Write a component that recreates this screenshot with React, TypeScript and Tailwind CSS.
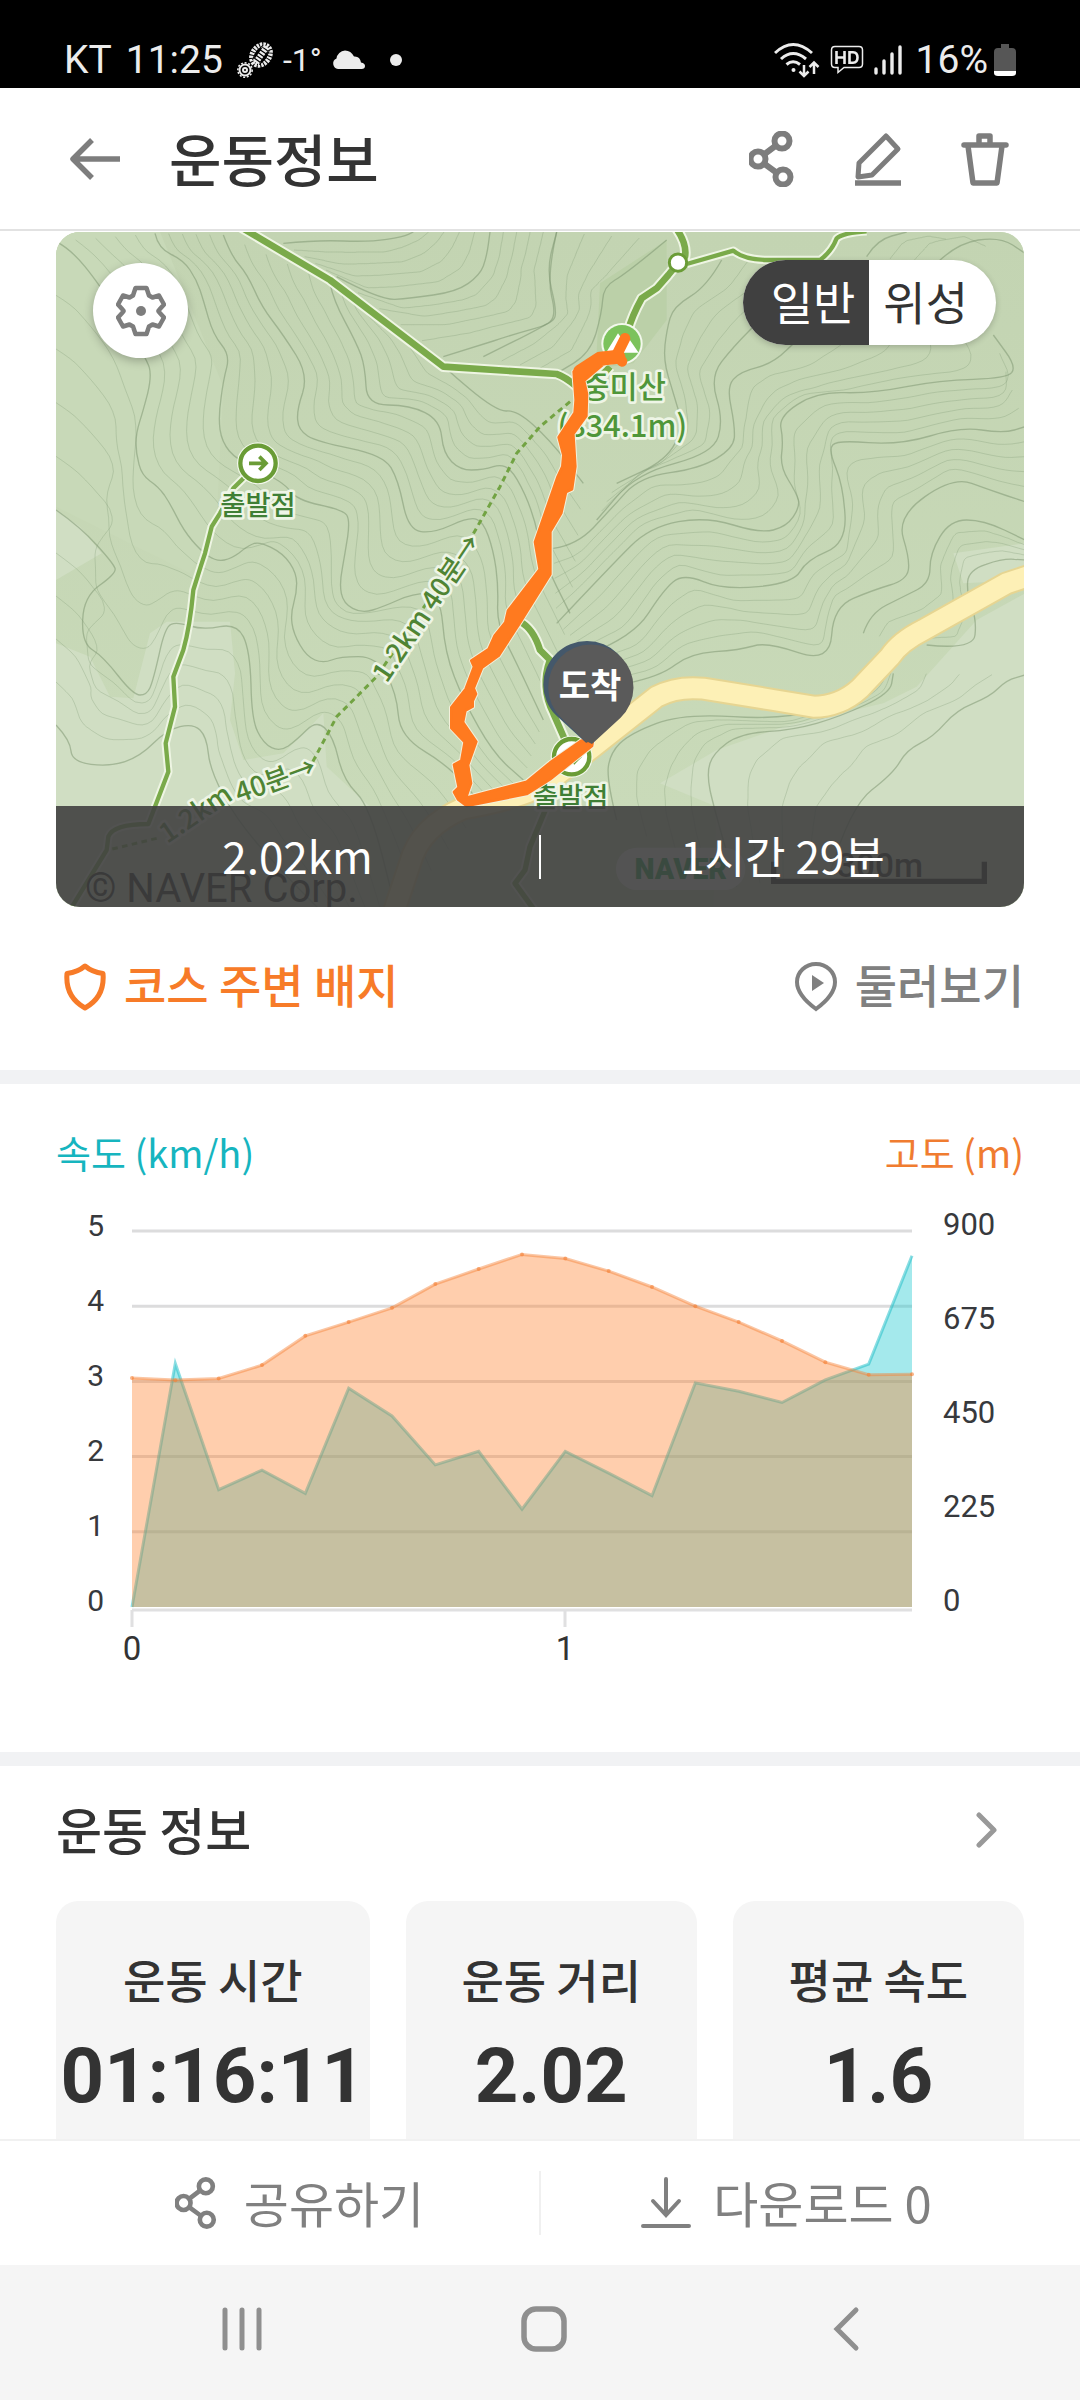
import React from "react";

type Pt = [number, number];

/* ---------- contour helpers ---------- */

function resample(pts: Pt[], n: number): Pt[] {
  const lens = [0];
  for (let i = 1; i < pts.length; i++) {
    lens.push(lens[i - 1] + Math.hypot(pts[i][0] - pts[i - 1][0], pts[i][1] - pts[i - 1][1]));
  }
  const total = lens[lens.length - 1];
  const out: Pt[] = [];
  let k = 1;
  for (let i = 0; i < n; i++) {
    const d = (total * i) / (n - 1);
    while (k < pts.length - 1 && lens[k] < d) k++;
    const f = (d - lens[k - 1]) / (lens[k] - lens[k - 1]);
    out.push([
      pts[k - 1][0] + (pts[k][0] - pts[k - 1][0]) * f,
      pts[k - 1][1] + (pts[k][1] - pts[k - 1][1]) * f,
    ]);
  }
  return out;
}

function toPath(pts: Pt[]): string {
  let d = `M${pts[0][0].toFixed(0)} ${pts[0][1].toFixed(0)}`;
  for (let i = 1; i < pts.length - 1; i++) {
    const mx = (pts[i][0] + pts[i + 1][0]) / 2;
    const my = (pts[i][1] + pts[i + 1][1]) / 2;
    d += `Q${pts[i][0].toFixed(0)} ${pts[i][1].toFixed(0)} ${mx.toFixed(0)} ${my.toFixed(0)}`;
  }
  const last = pts[pts.length - 1];
  return d + `L${last[0].toFixed(0)} ${last[1].toFixed(0)}`;
}

function between(a: Pt[], b: Pt[], count: number): string[] {
  const ra = resample(a, 44);
  const rb = resample(b, 44);
  const out: string[] = [];
  for (let c = 1; c <= count; c++) {
    const t = c / (count + 1);
    out.push(
      toPath(ra.map((p, i) => [p[0] + (rb[i][0] - p[0]) * t, p[1] + (rb[i][1] - p[1]) * t] as Pt))
    );
  }
  return out;
}

const west: Pt[][] = [
  [[18, 1515], [60, 1560], [65, 1625], [180, 1640], [270, 1610], [350, 1530], [430, 1510], [470, 1550], [480, 1650], [560, 1800], [700, 1960], [820, 2080]],
  [[18, 870], [90, 920], [190, 1030], [200, 1060], [100, 1130], [95, 1270], [160, 1310], [250, 1425], [290, 1425], [310, 1380], [345, 1220], [380, 1205], [460, 1230], [560, 1210], [600, 1290], [605, 1500], [640, 1570], [690, 1595], [740, 1560], [800, 1500], [850, 1550], [880, 1680], [960, 1760], [1040, 2080]],
  [[18, 65], [60, 85], [150, 195], [290, 415], [305, 470], [280, 570], [258, 640], [258, 700], [275, 765], [325, 800], [360, 850], [400, 930], [450, 990], [500, 1025], [545, 1015], [590, 980], [625, 963], [700, 1000], [740, 1060], [740, 1120], [722, 1180], [730, 1240], [770, 1310], [820, 1330], [870, 1310], [980, 1310], [1040, 1420], [1050, 1550], [1200, 1640], [1300, 1760]],
  [[315, 40], [325, 85], [400, 120], [440, 180], [460, 240], [490, 345], [540, 405], [520, 480], [505, 590], [515, 665], [560, 720], [700, 785], [740, 840], [880, 870], [900, 900], [885, 1000], [868, 1090], [880, 1150], [935, 1180], [1000, 1160], [1090, 1120], [1170, 1120], [1185, 1300], [1240, 1440], [1330, 1600], [1420, 1680]],
  [[520, 45], [545, 110], [590, 160], [635, 260], [700, 345], [775, 465], [740, 570], [745, 630], [800, 665], [1000, 705], [1045, 780], [1075, 930], [1150, 940], [1260, 890], [1300, 905], [1330, 990], [1345, 1100], [1340, 1210], [1400, 1330], [1480, 1500]],
  [[840, 190], [850, 240], [920, 370], [945, 440], [950, 555], [1080, 555], [1170, 600], [1180, 700], [1230, 750], [1300, 750], [1360, 730], [1400, 770], [1450, 880], [1480, 1020], [1560, 1180]],
  [[1000, 310], [1090, 350], [1180, 440], [1340, 575], [1400, 570], [1500, 660], [1600, 790]],
];

const north: Pt[][] = [
  [[700, 70], [800, 60], [960, 66], [1060, 50], [1090, 36]],
  [[860, 170], [990, 240], [1080, 235], [1220, 215], [1290, 165], [1310, 110], [1320, 36]],
  [[1180, 410], [1260, 385], [1400, 340], [1510, 310], [1520, 270], [1490, 150], [1520, 36]],
];

const summit: Pt[][] = [
  [[1520, 36], [1490, 170], [1520, 290], [1480, 320], [1300, 410]],
  [[1850, 60], [1730, 160], [1660, 200], [1655, 280], [1620, 400], [1520, 460]],
];

const east: Pt[][] = [
  [[1510, 985], [1580, 975], [1680, 870], [1770, 770], [1950, 745], [2050, 685], [2055, 620], [2030, 500], [2070, 455], [2170, 430], [2250, 350], [2330, 300]],
  [[1520, 1210], [1680, 1040], [1800, 920], [1970, 890], [2130, 940], [2210, 920], [2250, 860], [2240, 820], [2190, 740], [2200, 660], [2185, 590], [2300, 515], [2470, 520], [2670, 480], [2870, 475], [2900, 440], [2830, 345]],
  [[1620, 1300], [1750, 1250], [1840, 1110], [1900, 1060], [2020, 1110], [2230, 1090], [2270, 1020], [2390, 970], [2380, 800], [2335, 690], [2360, 660], [2550, 675], [2730, 620], [2860, 640], [2925, 620]],
  [[1730, 1390], [1830, 1370], [1920, 1300], [2070, 1290], [2150, 1265], [2340, 1330], [2350, 1160], [2470, 1110], [2570, 1080], [2580, 1020], [2540, 890], [2710, 770], [2820, 810], [2925, 845]],
];

const southEast: Pt[][] = [
  [[1700, 1800], [1670, 1680], [1680, 1600], [1740, 1540], [1900, 1480], [2200, 1500], [2400, 1440], [2500, 1350]],
  [[2060, 2000], [1990, 1760], [1970, 1660], [1990, 1600], [2070, 1540], [2230, 1530], [2370, 1490], [2520, 1420], [2530, 1360]],
  [[2340, 1960], [2400, 1760], [2530, 1660], [2570, 1590], [2650, 1550], [2720, 1470], [2820, 1430], [2870, 1380], [2925, 1365]],
];

const northEast: Pt[][] = [
  [[2015, 120], [1970, 200], [1870, 260], [1850, 330], [1840, 420], [1870, 520], [1900, 620], [1850, 720], [1700, 790]],
  [[2330, 130], [2150, 280], [2050, 380], [1980, 470], [2020, 600], [1990, 700], [1760, 760], [1640, 900]],
];

const corner: Pt[][] = [
  [[2450, 110], [2480, 60], [2570, 36]],
  [[2660, 130], [2720, 70], [2850, 50], [2925, 100]],
];

const pocket: Pt[][] = [
  [[2440, 1240], [2460, 1180], [2560, 1130], [2640, 1090], [2640, 1000], [2700, 900], [2800, 900], [2925, 960]],
  [[2630, 1275], [2770, 1290], [2780, 1200], [2750, 1120], [2755, 1050], [2860, 1015], [2925, 1020]],
];

const families: { lines: Pt[][]; fill: number }[] = [
  { lines: west, fill: 4 },
  { lines: north, fill: 4 },
  { lines: summit, fill: 3 },
  { lines: east, fill: 4 },
  { lines: southEast, fill: 3 },
  { lines: northEast, fill: 3 },
  { lines: corner, fill: 2 },
  { lines: pocket, fill: 3 },
];

const majorContours = families.flatMap((f) => f.lines.map(toPath));
const minorContours = families.flatMap((f) =>
  f.lines.slice(1).flatMap((line, i) => between(f.lines[i], line, f.fill))
);

/* ---------- map ---------- */

const trails = [
  { d: "M570 20 840 180 1180 440 1520 462Q1545 470 1580 500", w: 20 },
  { d: "M1875 20Q1912 70 1905 110L1885 128 1855 165 1820 205 1775 235Q1745 290 1735 330M1680 440Q1640 490 1570 500", w: 20 },
  { d: "M1910 132 2050 92Q2080 118 2150 120H2310Q2345 95 2360 55 2380 38 2450 34", w: 13 },
  { d: "M585 770 550 805 510 880 485 920 465 1000 452 1040 430 1110Q420 1220 400 1290L370 1370 375 1460 347 1570 355 1655 295 1812Q190 1812 175 1850L170 1890 60 2070", w: 13 },
  { d: "M1410 1205Q1450 1225 1470 1290L1500 1320Q1470 1400 1510 1480L1545 1560", w: 20 },
  { d: "M1490 1760 1440 1880 1425 1950 1395 1990 1460 2080", w: 16 },
];

const route =
  "M1571 455 1577 540 1574 578 1526 652 1540 705 1537 740 1522 772 1455 966 1469 1048 1374 1172 1366 1207 1334 1247 1316 1287 1264 1322 1272 1340 1247 1407 1204 1462V1524L1244 1566 1234 1622 1212 1634 1226 1702 1212 1716 1224 1738 1250 1758 1430 1722 1500 1678 1626 1578 1628 1566 1594 1562 1500 1628 1430 1685 1248 1733 1263 1690 1254 1635 1279 1565 1239 1507 1246 1472 1268 1460V1443L1278 1422 1271 1405 1296 1343 1346 1307 1411 1207 1501 1063V935L1534 879 1548 816 1566 808 1576 740 1570 642 1609 588 1611 522 1602 482 1664 430 1700 422Z";

function StartMark({ x, y }: { x: number; y: number }) {
  return (
    <g transform={`translate(${x} ${y})`}>
      <circle r="63" fill="#f3f8ec" />
      <circle r="53" fill="#fff" stroke="#6a9c36" strokeWidth="13" />
      <path d="M-27 0H22M4-20 24 0 4 20" fill="none" stroke="#6a9c36" strokeWidth="11" />
    </g>
  );
}

function TrailMap() {
  return (
    <svg viewBox="18 36 2904 2025" className="block h-auto w-full bg-[#c5d6b4]" role="img" aria-label="중미산 코스 지도">
      <defs>
        <linearGradient id="land" x1="0" y1="0" x2="0" y2="1">
          <stop offset="0" stopColor="#c3d4b2" />
          <stop offset="1" stopColor="#cadbba" />
        </linearGradient>
      </defs>
      <rect x="18" y="36" width="2904" height="2025" fill="url(#land)" />
      <path d="M18 36H330L520 500 500 900 420 1060 18 860Z" fill="#c8d9b8" />
      <path d="M1850 60 1650 190 1640 400 1560 460 1750 430 1850 300Z" fill="#bbd0a8" />
      <g fill="#d0dec3">
        <path d="M18 870 90 920 155 1000 18 1080Z" />
        <path d="M18 1270 120 1310 180 1430 250 1435 300 1240 350 1205 540 1205 555 1360 540 1500 580 1620 700 1600 820 1480 830 1640 960 1760 960 2070H18Z" />
        <path d="M2925 1120 2780 1200 2600 1400 2500 1450 2200 1520 2000 1590 1830 1690 2000 1760 1990 2070H2925Z" />
        <path d="M2710 1000 2925 970V1080L2740 1090Z" />
      </g>
      <g fill="none" stroke="#7f9873" strokeOpacity=".3" strokeWidth="3">
        {minorContours.map((d, i) => (
          <path key={i} d={d} />
        ))}
      </g>
      <g fill="none" stroke="#7f9873" strokeOpacity=".55" strokeWidth="4">
        {majorContours.map((d, i) => (
          <path key={i} d={d} />
        ))}
      </g>

      <g fill="none" strokeLinejoin="round">
        {["#e6d592", "#fdf0b6"].map((c, i) => (
          <path
            key={c}
            d="M2960 1060 2870 1090 2620 1230Q2550 1265 2520 1310L2430 1405Q2370 1460 2290 1460L2170 1440 1960 1406Q1880 1398 1820 1430L1630 1580 1500 1680Q1440 1730 1240 1765 1110 1820 1080 1930L1030 2080"
            stroke={c}
            strokeWidth={i ? 60 : 72}
          />
        ))}
      </g>
      <g fill="none" strokeLinejoin="round">
        {trails.map((t) => (
          <path key={t.d} d={t.d} stroke="#eef5e3" strokeWidth={t.w + 12} />
        ))}
        {trails.map((t) => (
          <path key={t.d} d={t.d} stroke="#7aaa4a" strokeWidth={t.w} />
        ))}
        <path
          d="M1560 545 1470 620 1400 700 1350 800 1265 950 980 1370 860 1490 775 1650M320 1855 175 1890"
          stroke="#72a343"
          strokeWidth="9"
          strokeDasharray="17 13"
        />
      </g>
      <circle cx="1884" cy="128" r="26" fill="#fff" stroke="#6a9c36" strokeWidth="9" />
      <circle cx="1716" cy="371" r="62" fill="#f3f8ec" />
      <circle cx="1716" cy="371" r="56" fill="#7cc25c" />
      <path d="M1668 398 1704 340 1722 366 1734 352 1766 398Z" fill="#fff" />
      <StartMark x={624} y={730} />
      <StartMark x={1565} y={1610} />

      <g
        fill="#3f7f35"
        stroke="#eef5e6"
        strokeWidth="16"
        strokeLinejoin="round"
        paintOrder="stroke"
        fontFamily="'Noto Sans CJK KR', sans-serif"
        fontWeight="500"
      >
        <g fontSize="82" textAnchor="middle">
          <text x="624" y="884">출발점</text>
          <text x="1562" y="1760">출발점</text>
        </g>
        <g fontSize="92" textAnchor="middle" fill="#4f9639">
          <text x="1721" y="535">중미산</text>
          <text x="1717" y="651">(834.1m)</text>
        </g>
        <g fontSize="82" fill="#4f8434">
          <text transform="translate(1010 1392) rotate(-56)">1.2km 40분→</text>
          <text transform="translate(352 1872) rotate(-34)">1.2km</text>
          <text transform="translate(568 1750) rotate(-20)">40분→</text>
        </g>
      </g>

      <g fill="none" stroke="#ff7a1f" strokeLinejoin="round" strokeLinecap="round">
        <path d={route} stroke="#f3f0dc" strokeWidth="14" />
        <path d={route} fill="#ff7a1f" strokeWidth="8" />
        <path d="M1725 355 1700 405 1716 424" strokeWidth="32" />
        <path d="M1705 410 1650 416 1590 455" strokeWidth="42" />
      </g>

      <path d="M1518 1486A131 131 0 1 1 1704 1486L1608 1568Z" fill="#44586b" />
      <path d="M1534 1494A128 128 0 1 1 1711 1494L1626 1572 1614 1566 1610 1568Z" fill="#5a5a5a" />
      <text x="1620" y="1434" textAnchor="middle" fontSize="102" fontWeight="700" fill="#fff" fontFamily="'Noto Sans CJK KR', sans-serif">
        도착
      </text>

      <text x="105" y="2045" fontSize="120" fill="#000" fontFamily="Roboto, sans-serif">
        © NAVER Corp.
      </text>
      <rect x="1698" y="1883" width="388" height="127" rx="63" fill="#fff" />
      <text x="1892" y="1976" textAnchor="middle" fontSize="86" fontWeight="900" fill="#03a040" fontFamily="Roboto, sans-serif">
        NAVER
      </text>
      <path d="M2171 1925V1984H2803V1925" fill="none" stroke="#000" strokeWidth="16" />
      <text x="2490" y="1970" textAnchor="middle" fontSize="100" fontWeight="500" fill="#000" fontFamily="Roboto, sans-serif">
        300m
      </text>
    </svg>
  );
}

/* ---------- chart ---------- */

const elevation = [548, 543, 547, 579, 649, 682, 716, 773, 809, 844, 834, 804, 766, 720, 682, 637, 586, 556, 557];
const speed = [0, 3.24, 1.56, 1.82, 1.51, 2.91, 2.54, 1.89, 2.07, 1.3, 2.07, 1.78, 1.48, 2.98, 2.87, 2.72, 3.02, 3.23, 4.67];

const plotX = (i: number) => 76 + (i * 780) / 18;
const plotY = (v: number, max: number) => 423 - (v / max) * 376;

function points(values: number[], max: number) {
  return values.map((v, i) => `${plotX(i).toFixed(1)},${plotY(v, max).toFixed(1)}`).join(" ");
}

function Chart() {
  const elev = points(elevation, 900);
  const spd = points(speed, 5);
  return (
    <svg viewBox="0 0 968 500" className="mt-1 block h-auto w-full" role="img" aria-label="속도와 고도 그래프" fontFamily="Roboto, sans-serif" fill="#37393d">
      {[1, 2, 3, 4, 5].map((v) => (
        <path key={v} d={`M76 ${plotY(v, 5)}H856`} stroke="#dcdcdd" strokeWidth="3" />
      ))}
      <path d="M76 426H856M76 426V443M509 426V443" stroke="#e0e0e1" strokeWidth="3" fill="none" />
      <polygon points={`76,423 ${spd} 856,423`} fill="#1cc8cf" fillOpacity=".4" />
      <polyline points={spd} fill="none" stroke="#18bcc6" strokeOpacity=".5" strokeWidth="3" />
      <polygon points={`76,423 ${elev} 856,423`} fill="#ff7d28" fillOpacity=".38" />
      <polyline points={elev} fill="none" stroke="#f58036" strokeOpacity=".45" strokeWidth="3" />
      {elevation.map((v, i) => (
        <circle key={i} cx={plotX(i)} cy={plotY(v, 900)} r="2" fill="#f58036" fillOpacity=".6" />
      ))}
      <g fontSize="30" textAnchor="end">
        {[0, 1, 2, 3, 4, 5].map((v) => (
          <text key={v} x="48" y={427 - v * 75}>
            {v}
          </text>
        ))}
      </g>
      <g fontSize="31">
        {[0, 225, 450, 675, 900].map((v, i) => (
          <text key={v} x="887" y={427 - i * 94}>
            {v}
          </text>
        ))}
      </g>
      <g fontSize="33" textAnchor="middle" fill="#333">
        <text x="76" y="476">0</text>
        <text x="509" y="476">1</text>
      </g>
    </svg>
  );
}

/* ---------- icons ---------- */

function ShareIcon({ className, w }: { className: string; w: number }) {
  return (
    <svg viewBox="0 0 48 56" className={className} fill="none" stroke="currentColor" strokeWidth={w}>
      <circle cx="33" cy="10" r="7.5" />
      <circle cx="9" cy="28" r="7.5" />
      <circle cx="34" cy="46" r="7.5" />
      <path d="M15 23.500 27 14.500M15 32.500 28 42" />
    </svg>
  );
}

function StatusBar() {
  return (
    <div className="flex h-22 items-center bg-black pt-8 pr-16 pl-16 font-[Roboto] text-[39px] leading-none text-[#ececec]">
      <span>KT</span>
      <span className="ml-3.5">11:25</span>
      <svg viewBox="0 0 36 36" className="ml-3.5 size-9" fill="none" stroke="#ececec">
        <g transform="rotate(35 24 13)">
          <ellipse cx="24" cy="13" rx="8.500" ry="11" strokeWidth="5" strokeDasharray="2.200 1" />
          <path d="M24 3V24" strokeWidth="6" strokeDasharray="2.200 1.200" />
          <path d="M20 4Q17 13 20 22M28 4Q31 13 28 22" strokeWidth="1" stroke="#000" />
        </g>
        <circle cx="8" cy="28" r="5.500" strokeWidth="2" />
        <circle cx="8" cy="28" r="7.200" strokeWidth="1.500" strokeDasharray="2 1.700" />
        <circle cx="8" cy="28" r="2" strokeWidth="2" />
      </svg>
      <span className="ml-2.5 text-[32px]">-1°</span>
      <svg viewBox="0 0 34 20" className="ml-2.5 h-5 w-[34px]" fill="#ececec">
        <path d="M6 19A5.500 5.500 0 0 1 4.500 8.500 9 9 0 0 1 13 .5Q19 .5 22 6.500 28 6 29 12.500 33 13 33 16 33 19 29.500 19Z" />
      </svg>
      <span className="ml-6 size-3 rounded-full bg-[#ececec]" />
      <svg viewBox="0 0 46 36" className="ml-auto h-9 w-[46px]" fill="none" stroke="#ececec" strokeWidth="3">
        <path d="M1 11Q19-6 38 11M7 17Q19 6 32 17M12.500 22.500Q19 17 26 22.500" />
        <circle cx="19.500" cy="28" r="2" fill="#ececec" stroke="none" />
        <path d="M30 23V34M25.500 29.500 30 34 34.500 29.500M40 32V21M35.500 25 40 20.500 44.500 25" strokeWidth="2.500" />
      </svg>
      <svg viewBox="0 0 34 30" className="ml-2.5 h-[30px] w-[34px]" fill="none" stroke="#ececec">
        <path d="M5 1.500H29Q32.500 1.500 32.500 5V19Q32.500 22.500 29 22.500H14L8 27.500V22.500H5Q1.500 22.500 1.500 19V5Q1.500 1.500 5 1.500Z" strokeWidth="1.500" />
        <path d="M6.500 6V19M14.500 6V19M6.500 12.500H14.500M19.500 7.200V17.800H23Q27.500 17.500 27.500 12.500T23 7.200Z" strokeWidth="2.600" />
      </svg>
      <svg viewBox="0 0 28 32" className="ml-2.5 h-8 w-7" stroke="#ececec" strokeWidth="3.400" strokeLinecap="round">
        <path d="M2 25V29M10 17V29M18 10V29M26 3V29" />
      </svg>
      <span className="ml-3.5">16%</span>
      <svg viewBox="0 0 22 32" className="ml-1.5 h-8 w-[22px]">
        <path d="M7 0H15V4H18Q22 4 22 8V27H0V8Q0 4 4 4H7Z" fill="#565656" />
        <path d="M0 27H22V29Q22 32 18 32H4Q0 32 0 29Z" fill="#fff" />
      </svg>
    </div>
  );
}

const stats = [
  { label: "운동 시간", value: "01:16:11" },
  { label: "운동 거리", value: "2.02" },
  { label: "평균 속도", value: "1.6" },
];

export default function App() {
  return (
    <div className="flex min-h-screen flex-col bg-white font-['Noto_Sans_CJK_KR',sans-serif] text-[#333]">
      <StatusBar />

      <header className="mb-px flex h-[143px] items-center border-b-2 border-[#e2e2e2] pr-[71px] pl-[70px] text-[#7d7d7d]">
        <button type="button" aria-label="뒤로">
          <svg viewBox="0 0 50 42" className="block h-[42px] w-[50px]" fill="none" stroke="currentColor" strokeWidth="5.500">
            <path d="M50 21H4M22 2 3 21 22 40" strokeLinejoin="round" />
          </svg>
        </button>
        <h1 className="ml-[49px] pb-1 text-[57px] leading-[60px] font-medium text-[#333]">운동정보</h1>
        <div className="ml-auto flex gap-[58px]">
          <button type="button" aria-label="공유">
            <ShareIcon className="block h-14 w-12" w={6} />
          </button>
          <button type="button" aria-label="수정">
            <svg viewBox="0 0 48 56" className="block h-14 w-12" fill="none" stroke="currentColor" strokeWidth="5">
              <path d="M31 5 43 18 17 44 3 46 4 32Z" strokeLinejoin="round" />
              <path d="M0 52H46" strokeWidth="5.500" />
            </svg>
          </button>
          <button type="button" aria-label="삭제">
            <svg viewBox="0 0 48 56" className="block h-14 w-12" fill="none" stroke="currentColor" strokeWidth="5.500" strokeLinejoin="round">
              <path d="M3 14H45" strokeLinecap="round" />
              <path d="M18 13V5H29V13M7 15 12 52H36L41 15" />
            </svg>
          </button>
        </div>
      </header>

      <section className="relative mx-14 overflow-hidden rounded-[24px]">
        <TrailMap />
        <button
          type="button"
          aria-label="지도 설정"
          className="absolute top-[31px] left-[37px] flex size-[95px] items-center justify-center rounded-full bg-white text-[#7d7d7d] shadow-[0_3px_10px_rgba(0,0,0,0.25)]"
        >
          <svg viewBox="0 0 50 52" className="h-[52px] w-[50px]" fill="none" stroke="currentColor" strokeWidth="4.500" strokeLinejoin="round">
            <path d="M19.500 3H30.500L33 10.500 36.500 12.500 43 10.500 48 19.500 43 25Q42 26 43 27L48 32.500 43 41.500 36.500 39.500 33 41.500 30.500 49H19.500L17 41.500 13.500 39.500 7 41.500 2 32.500 7 27Q8 26 7 25L2 19.500 7 10.500 13.500 12.500 17 10.500Z" />
            <circle cx="25" cy="26" r="5" fill="currentColor" stroke="none" />
          </svg>
        </button>
        <div className="absolute top-7 right-7 flex h-[85px] overflow-hidden rounded-full bg-white text-[46px] leading-[80px] shadow-[0_2px_6px_rgba(0,0,0,0.2)]">
          <button type="button" aria-pressed="true" className="bg-[#404040] pr-3.5 pb-[5px] pl-7 text-white">
            일반
          </button>
          <button type="button" aria-pressed="false" className="pr-7 pb-[5px] pl-3.5">
            위성
          </button>
        </div>
        <div className="absolute inset-x-0 bottom-0 flex h-[101px] items-center bg-[#404040]/90 text-[44px] leading-[60px] text-white">
          <span className="flex-1 pb-1 text-center">2.02km</span>
          <span className="h-11 w-0.5 bg-white" />
          <span className="flex-1 pb-1 text-center">1시간 29분</span>
        </div>
      </section>

      <div className="flex h-[163px] items-center justify-between px-14 pb-1 text-[46px] leading-[60px] font-medium">
        <button type="button" className="flex items-center gap-[18px] pl-2 text-[#f77b28]">
          <svg viewBox="0 0 42 48" className="h-12 w-[42px]" fill="none" stroke="currentColor" strokeWidth="5" strokeLinejoin="round">
            <path d="M21 3Q28 9 39 10.500 41 34 21 45 1 34 3 10.500 14 9 21 3Z" />
          </svg>
          <span className="pb-2">코스 주변 배지</span>
        </button>
        <button type="button" className="flex items-center gap-[18px] text-[#808080]">
          <svg viewBox="0 0 42 50" className="h-[50px] w-[42px]" fill="none" stroke="currentColor" strokeWidth="4">
            <path d="M21 47Q2 33 2 20A19 18 0 0 1 40 20Q40 33 21 47Z" />
            <path d="M17 13 29 21 17 29Z" fill="currentColor" stroke="none" />
          </svg>
          <span className="pb-2">둘러보기</span>
        </button>
      </div>

      <div className="h-3.5 bg-[#f1f2f4]" />

      <section className="px-14 pt-10 pb-[68px]">
        <div className="flex justify-between text-[38px] leading-[56px]">
          <span className="text-[#16b5bf]">속도 (km/h)</span>
          <span className="text-[#f07c30]">고도 (m)</span>
        </div>
        <Chart />
      </section>

      <div className="h-3.5 bg-[#f1f2f4]" />

      <section className="flex flex-1 flex-col px-14 pt-8">
        <div className="flex items-center justify-between">
          <h2 className="text-[50px] leading-[60px] font-medium">운동 정보</h2>
          <button type="button" aria-label="운동 정보 더보기" className="pt-1 pr-[27px] text-[#999]">
            <svg viewBox="0 0 21 36" className="block h-9 w-[21px]" fill="none" stroke="currentColor" strokeWidth="5" strokeLinecap="round" strokeLinejoin="round">
              <path d="M3 3 18 18 3 33" />
            </svg>
          </button>
        </div>
        <div className="mt-[43px] grid flex-1 grid-cols-[14fr_13fr_13fr] gap-9">
          {stats.map((s) => (
            <div key={s.label} className="rounded-t-[22px] bg-[#f5f5f5] pt-[47px] text-center">
              <p className="text-[46px] leading-[60px] font-medium">{s.label}</p>
              <p className="mt-7 font-[Roboto] text-[76px] leading-[80px] font-bold">{s.value}</p>
            </div>
          ))}
        </div>
      </section>

      <footer>
        <div className="grid h-[126px] grid-cols-[1fr_2px_1fr] items-center border-t-2 border-[#f1f1f1] text-[49px] leading-[60px] text-[#808080]">
          <div className="flex justify-center pl-[60px]">
            <button type="button" className="flex items-center gap-6">
              <ShareIcon className="h-[52px] w-[45px]" w={5} />
              <span className="pb-0.5">공유하기</span>
            </button>
          </div>
          <span className="h-16 bg-[#f0f0f0]" />
          <div className="flex justify-center pr-12">
            <button type="button" className="flex items-center gap-[22px]">
              <svg viewBox="0 0 50 52" className="h-[52px] w-[50px]" fill="none" stroke="currentColor" strokeWidth="4" strokeLinecap="round">
                <path d="M25 2V38M12 24 25 38 38 24M2 49H48" />
              </svg>
              <span className="pb-0.5">다운로드 0</span>
            </button>
          </div>
        </div>
        <nav className="flex h-[135px] items-center justify-between bg-[#f5f5f5] pr-[211px] pb-2 pl-[219px] text-[#8f8f8f]">
          <button type="button" aria-label="최근 앱">
            <svg viewBox="0 0 46 46" className="size-[46px]" stroke="currentColor" strokeWidth="5" strokeLinecap="round">
              <path d="M6 4V42M23 4V42M40 4V42" />
            </svg>
          </button>
          <button type="button" aria-label="홈">
            <svg viewBox="0 0 46 46" className="size-[46px]" fill="none" stroke="currentColor" strokeWidth="5.500">
              <rect x="3" y="3" width="40" height="40" rx="12" />
            </svg>
          </button>
          <button type="button" aria-label="뒤로 가기">
            <svg viewBox="0 0 46 46" className="size-[46px]" fill="none" stroke="currentColor" strokeWidth="5" strokeLinecap="round">
              <path d="M33 4 14 23 33 42" />
            </svg>
          </button>
        </nav>
      </footer>
    </div>
  );
}
